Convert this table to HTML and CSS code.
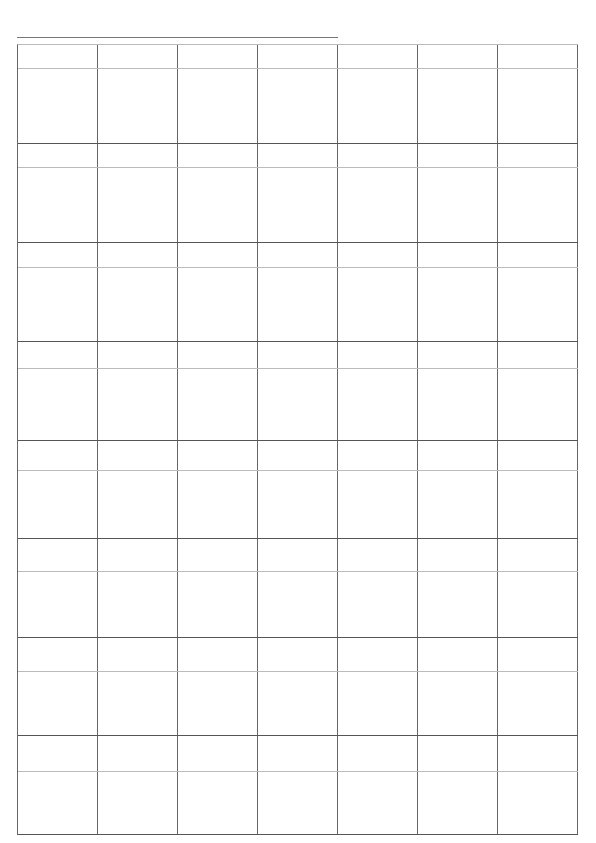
FILE: index.html
```html
<!DOCTYPE html>
<html>
<head>
<meta charset="utf-8">
<link rel="stylesheet" href="styles.css">
</head>
<body>
<div class="page">
  <div class="rule"></div>
  <div class="cal">
    <div class="week w1"><div class="row head"><div></div><div></div><div></div><div></div><div></div><div></div><div></div></div><div class="row body"><div></div><div></div><div></div><div></div><div></div><div></div><div></div></div></div>
    <div class="week w2"><div class="row head"><div></div><div></div><div></div><div></div><div></div><div></div><div></div></div><div class="row body"><div></div><div></div><div></div><div></div><div></div><div></div><div></div></div></div>
    <div class="week w3"><div class="row head"><div></div><div></div><div></div><div></div><div></div><div></div><div></div></div><div class="row body"><div></div><div></div><div></div><div></div><div></div><div></div><div></div></div></div>
    <div class="week w4"><div class="row head"><div></div><div></div><div></div><div></div><div></div><div></div><div></div></div><div class="row body"><div></div><div></div><div></div><div></div><div></div><div></div><div></div></div></div>
    <div class="week w5"><div class="row head"><div></div><div></div><div></div><div></div><div></div><div></div><div></div></div><div class="row body"><div></div><div></div><div></div><div></div><div></div><div></div><div></div></div></div>
    <div class="week w6"><div class="row head"><div></div><div></div><div></div><div></div><div></div><div></div><div></div></div><div class="row body"><div></div><div></div><div></div><div></div><div></div><div></div><div></div></div></div>
    <div class="week w7"><div class="row head"><div></div><div></div><div></div><div></div><div></div><div></div><div></div></div><div class="row body"><div></div><div></div><div></div><div></div><div></div><div></div><div></div></div></div>
    <div class="week w8"><div class="row head"><div></div><div></div><div></div><div></div><div></div><div></div><div></div></div><div class="row body"><div></div><div></div><div></div><div></div><div></div><div></div><div></div></div></div>
  </div>
</div>
</body>
</html>
```
FILE: styles.css
```css
* { box-sizing: border-box; }
html, body { margin: 0; padding: 0; background: #fff; }
body { font-family: "Liberation Sans", Arial, sans-serif; }
.page { padding: 37px 0 0 17px; }
.rule { width: 321px; height: 1px; background: #777; }
.cal {
  margin-top: 6px;
  width: 561px;
  border-left: 1px solid #666;
  border-top: 1px solid #bbb;
}
.week {
  display: flex;
  flex-direction: column;
  height: 99px;
  border-bottom: 1px solid #555;
}
.row { display: grid; grid-template-columns: repeat(7, 80px); }
.row > div { border-right: 1px solid #666; }
.head { border-bottom: 1px solid #bbb; }
.body { flex: 1; }
.w1 .head { height: 24px; }
.w2 .head { height: 24px; }
.w3 .head { height: 25px; }
.w4 .head { height: 27px; }
.w5 { height: 98px; }
.w5 .head { height: 30px; }
.w6 .head { height: 33px; }
.w7 { height: 98px; }
.w7 .head { height: 34px; }
.w8 .head { height: 36px; }
```
